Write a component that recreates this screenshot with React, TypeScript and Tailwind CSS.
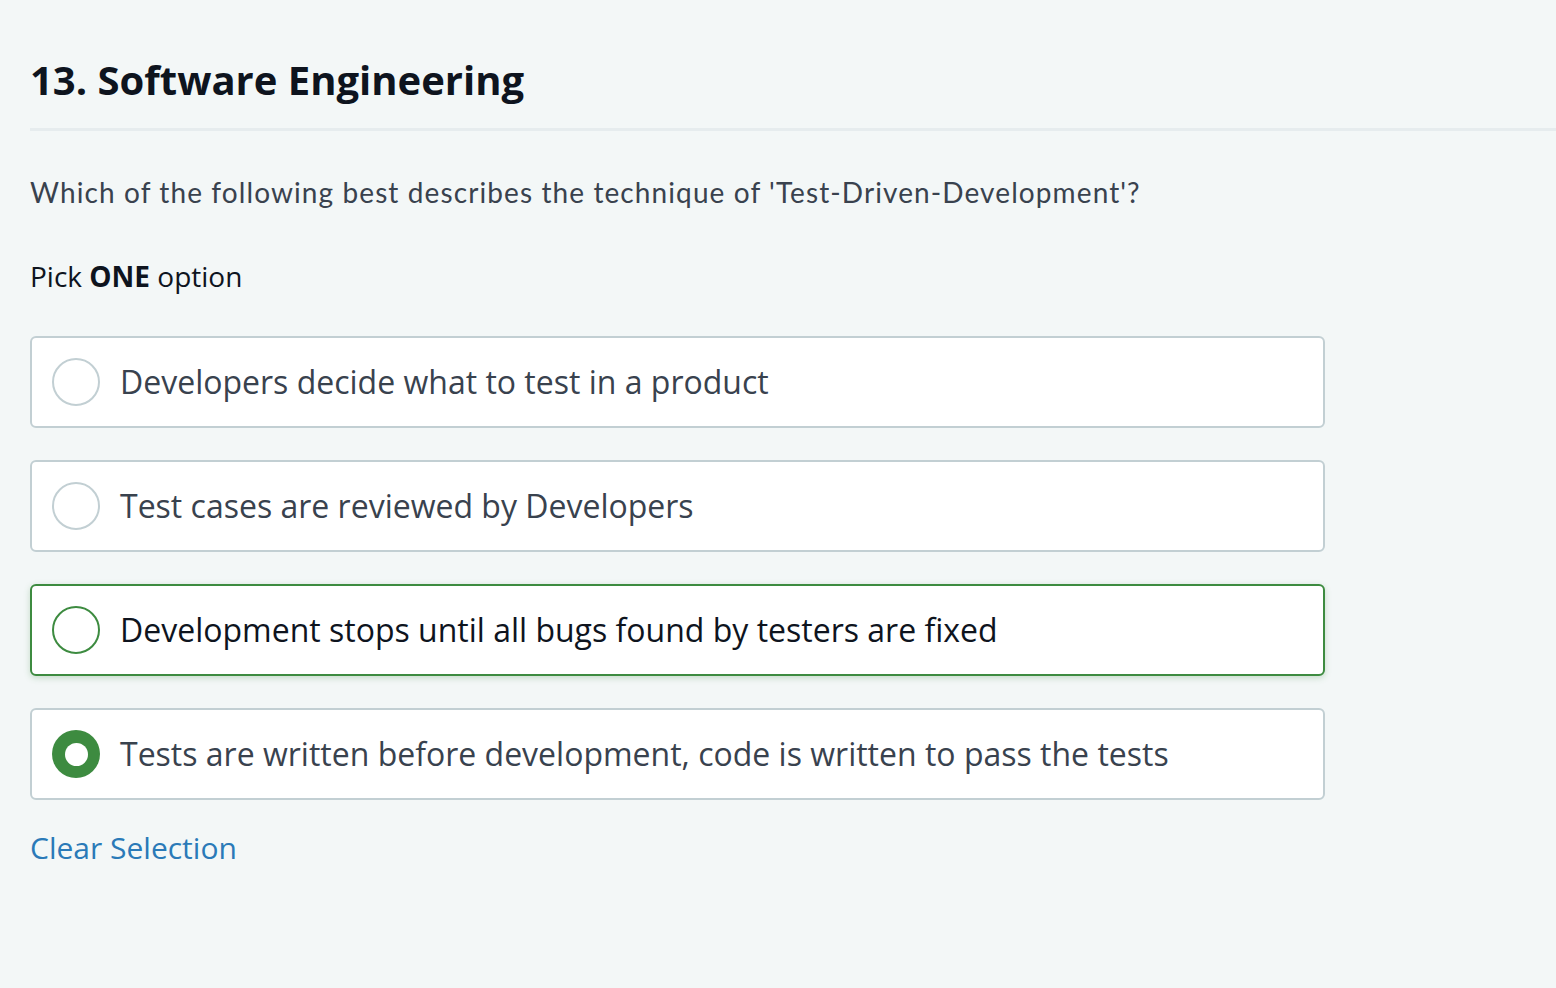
const options = [
  'Developers decide what to test in a product',
  'Test cases are reviewed by Developers',
  'Development stops until all bugs found by testers are fixed',
  'Tests are written before development, code is written to pass the tests',
];

function Radio({ state }: { state: 'idle' | 'hover' | 'checked' }) {
  if (state === 'checked') {
    return (
      <span className="w-[48px] h-[48px] rounded-full bg-[#3d8b40] flex items-center justify-center shrink-0">
        <span className="w-[23px] h-[23px] rounded-full bg-white" />
      </span>
    );
  }
  return (
    <span
      className={`w-[48px] h-[48px] rounded-full border-2 bg-white shrink-0 ${
        state === 'hover' ? 'border-[#3d8b40]' : 'border-[#c2cfd3]'
      }`}
    />
  );
}

export default function App() {
  const selected = 3;
  const hovered = 2;
  return (
    <div className="min-h-[988px] bg-[#f3f7f7] pl-[30px] pt-[52px] font-['Open_Sans',sans-serif]">
      <h1 className="text-[40px] leading-[56px] font-bold text-[#0e141e]">
        13. Software Engineering
      </h1>
      <div className="mt-[20px] h-[3px] bg-[#e6ecee]" />
      <p className="mt-[43px] text-[28px] leading-[36px] tracking-[1.1px] text-[#39424e] font-['Lato',sans-serif]">
        Which of the following best describes the technique of 'Test-Driven-Development'?
      </p>
      <p className="mt-[48px] text-[28px] leading-[36px] text-[#0e141e]">
        Pick <b className="font-bold">ONE</b> option
      </p>
      <div className="mt-[42px] w-[1295px] flex flex-col gap-[32px]">
        {options.map((opt, i) => {
          const isHover = i === hovered;
          return (
            <div
              key={opt}
              className={`h-[92px] rounded-[6px] border-2 bg-white flex items-center pl-[20px] gap-[20px] ${
                isHover
                  ? 'border-[#3d8b40] shadow-[0_2px_6px_rgba(61,139,64,0.25)]'
                  : 'border-[#c2cfd3]'
              }`}
            >
              <Radio state={i === selected ? 'checked' : isHover ? 'hover' : 'idle'} />
              <span
                className={`text-[32px] leading-[40px] ${
                  isHover ? 'text-[#0e141e]' : 'text-[#39424e]'
                }`}
              >
                {opt}
              </span>
            </div>
          );
        })}
      </div>
      <button className="mt-[28px] text-[30px] leading-[40px] text-[#2a7ab8] cursor-pointer">
        Clear Selection
      </button>
    </div>
  );
}
